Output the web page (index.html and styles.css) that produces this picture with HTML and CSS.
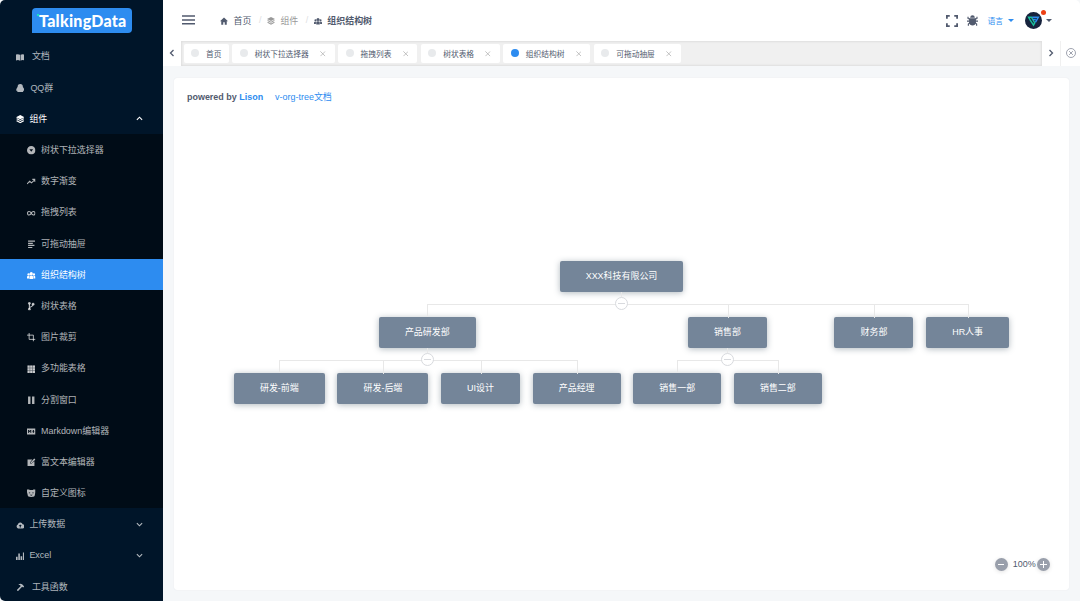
FILE: index.html
```html
<!DOCTYPE html>
<html>
	<head>
		<meta charset="utf-8">
		<title>组织结构树</title>
		<link rel="stylesheet" href="styles.css">
	</head>
	<body>
		<svg class="sprite">
			<symbol id="book" viewBox="0 0 16 16"><path d="M0 3q4-1.500 7.500.3V14.500Q4.500 12.500 0 14zM16 3q-4-1.500-7.500.3V14.500q3-2 7.500-.5z"/></symbol>
			<symbol id="qq" viewBox="0 0 16 16"><path d="M8 0c3.500 0 5 2 5 5.500C15 8 16 11 15.500 12.500c-.5.500-1-.5-1.500-.5 0 1-.8 1.500-1 2 1 .5 1 2-.5 2h-9c-1.500 0-1.500-1.500-.5-2-.2-.5-1-1-1-2-.5 0-1 1-1.500.5C0 11 1 8 3 5.500 3 2 4.500 0 8 0z"/></symbol>
			<symbol id="layers" viewBox="0 0 16 16"><path d="M8 0l8 4-8 4-8-4zM2.500 6.300L8 9.300l5.500-3L16 7.500l-8 4-8-4zM2.500 10L8 13l5.500-3 2.500 1.200-8 4.300-8-4.300z"/></symbol>
			<symbol id="down-circle" viewBox="0 0 16 16"><path fill-rule="evenodd" d="M8 0a8 8 0 110 16A8 8 0 018 0zM4.500 6L8 11l3.500-5z"/></symbol>
			<symbol id="trend" viewBox="0 0 16 16"><path fill="none" stroke="currentColor" stroke-width="2" d="M0 13l5-5 3.500 3L15 5M10 4.500h5v5"/></symbol>
			<symbol id="infinite" viewBox="0 0 16 16"><path fill="none" stroke="currentColor" stroke-width="2" d="M8 8C6 4 1 3.500 1 8s5 4 7 0 7-4.500 7 0-5 4-7 0z"/></symbol>
			<symbol id="list" viewBox="0 0 16 16"><path d="M2 1h13v2.500H2zM2 5h9v2.500H2zM2 9h12v2.500H2zM2 13h8v2.500H2z"/></symbol>
			<symbol id="people" viewBox="0 0 16 16"><circle cx="8" cy="5" r="3"/><circle cx="3" cy="6.500" r="2.200"/><circle cx="13" cy="6.500" r="2.200"/><path d="M4.500 15V11q0-2.500 3.500-2.500t3.500 2.500v4zM0 14v-3q0-2 3.800-2v5zM16 14v-3q0-2-3.800-2v5z"/></symbol>
			<symbol id="branch" viewBox="0 0 16 16"><g fill="none" stroke="currentColor" stroke-width="2.200"><path d="M4.500 3v10M4.500 12c0-4 7-2 7-8"/></g><circle cx="4.500" cy="2.500" r="2.500"/><circle cx="4.500" cy="13.500" r="2.500"/><circle cx="11.500" cy="4" r="2.500"/></symbol>
			<symbol id="crop" viewBox="0 0 16 16"><path fill="none" stroke="currentColor" stroke-width="1.800" d="M4 0v12h12M0 4h12v12"/></symbol>
			<symbol id="grid" viewBox="0 0 16 16"><path d="M1 1h4v4H1zM6 1h4v4H6zM11 1h4v4h-4zM1 6h4v4H1zM6 6h4v4H6zM11 6h4v4h-4zM1 11h4v4H1zM6 11h4v4H6zM11 11h4v4h-4z"/><path fill-opacity=".4" d="M1 1h14v14H1z"/></symbol>
			<symbol id="pause" viewBox="0 0 16 16"><path d="M2 1h4.500v14H2zM9.500 1H14v14H9.500z"/></symbol>
			<symbol id="markdown" viewBox="0 0 16 16"><path fill-rule="evenodd" d="M0 3h16v11H0zM2 5.500v6h1.500V8L5 10l1.500-2v3.500H8v-6H6.500L5 7.500 3.500 5.500zM11 5.500v3H9.500l2.500 3 2.500-3H13v-3z"/></symbol>
			<symbol id="edit" viewBox="0 0 16 16"><path d="M1 3h9L6 8v2.500h2.500L14 6v9H1zM13.500 1L16 3 9 9.500H7V8z"/></symbol>
			<symbol id="bear" viewBox="0 0 16 16"><path fill-rule="evenodd" d="M0 1h4l1 1h6l1-1h4v5l-1 4c0 4-2 5-7 5s-7-1-7-5L0 6zM3.500 6.500v1.500H6V6.500zM10 6.500v1.500h2.500V6.500zM5 11q3 3 6 0z"/></symbol>
			<symbol id="upload" viewBox="0 0 16 16"><path fill-rule="evenodd" d="M4 14a4 4 0 01-.5-7.500A4.700 4.700 0 0112.500 6 4 4 0 0112 14zM8 6.500L5 9.500h2V12h2V9.500h2z"/></symbol>
			<symbol id="chart" viewBox="0 0 16 16"><path d="M0 9h3v6.500H0zM4.300 3h3v12.500h-3zM8.600 8h3v7.500h-3zM13 1h3v14.500h-3z"/></symbol>
			<symbol id="hammer" viewBox="0 0 16 16"><path d="M5 2.500q4-2 7 .5l3.500 3.500-2 2-2-1.500-8 8.500L1.500 13 9 5.500Q7.500 3.500 5 3.500z"/></symbol>
			<symbol id="home" viewBox="0 0 16 16"><path d="M8 1l8 7.500h-2.500V15.500h-4v-5h-3v5h-4V8.500H0z"/></symbol>
			<symbol id="arrow" viewBox="0 0 16 16"><path fill="none" stroke="currentColor" stroke-width="2.600" d="M2 5l6 6 6-6"/></symbol>
			<symbol id="full" viewBox="0 0 16 16"><path fill="none" stroke="currentColor" stroke-width="2.400" d="M1.200 5V1.200H5M11 1.200h3.800V5M14.800 11v3.800H11M5 14.800H1.200V11"/></symbol>
			<symbol id="bug" viewBox="0 0 16 16"><path d="M4.500 4Q5 .5 8 .5T11.500 4z"/><path d="M3 4.800h10v6.500q-1 4-5 4t-5-4z"/><path fill="none" stroke="currentColor" stroke-width="1.700" d="M4 6L1.500 5V2.500M12 6l2.500-1V2.500M4 9H0M12 9h4M4 11.500L2 13v2.500M12 11.500l2 1.500v2.500"/></symbol>
			<symbol id="close" viewBox="0 0 16 16"><path fill="none" stroke="currentColor" stroke-width="2" d="M1 1l14 14M15 1L1 15"/></symbol>
		</svg>
		<div class="layout">
			<div class="sider">
				<div class="logo"><span>TalkingData</span></div>
				<div class="menu">
					<div class="item wide"><svg><use href="#book"/></svg>文档</div>
					<div class="item qq"><svg><use href="#qq"/></svg>QQ群</div>
					<div class="item open"><svg><use href="#layers"/></svg>组件<svg class="arrow up"><use href="#arrow"/></svg></div>
					<div class="submenu">
						<div class="item"><svg><use href="#down-circle"/></svg>树状下拉选择器</div>
						<div class="item"><svg><use href="#trend"/></svg>数字渐变</div>
						<div class="item"><svg><use href="#infinite"/></svg>拖拽列表</div>
						<div class="item"><svg><use href="#list"/></svg>可拖动抽屉</div>
						<div class="item active"><svg><use href="#people"/></svg>组织结构树</div>
						<div class="item"><svg><use href="#branch"/></svg>树状表格</div>
						<div class="item"><svg><use href="#crop"/></svg>图片裁剪</div>
						<div class="item"><svg><use href="#grid"/></svg>多功能表格</div>
						<div class="item"><svg><use href="#pause"/></svg>分割窗口</div>
						<div class="item"><svg><use href="#markdown"/></svg>Markdown编辑器</div>
						<div class="item"><svg><use href="#edit"/></svg>富文本编辑器</div>
						<div class="item"><svg><use href="#bear"/></svg>自定义图标</div>
					</div>
					<div class="item"><svg><use href="#upload"/></svg>上传数据<svg class="arrow"><use href="#arrow"/></svg></div>
					<div class="item"><svg><use href="#chart"/></svg>Excel<svg class="arrow"><use href="#arrow"/></svg></div>
					<div class="item wide"><svg><use href="#hammer"/></svg>工具函数</div>
				</div>
			</div>
			<div class="main">
				<div class="header">
					<svg class="burger" viewBox="0 0 13 10"><path d="M0 .3h13v1.500H0zM0 4.200h13v1.500H0zM0 8.100h13v1.500H0z"/></svg>
					<div class="crumbs">
						<svg><use href="#home"/></svg><span>首页</span><i>/</i>
						<svg class="dim"><use href="#layers"/></svg><span class="dim">组件</span><i>/</i>
						<svg><use href="#people"/></svg><b>组织结构树</b>
					</div>
					<div class="tools">
						<svg class="tool"><use href="#full"/></svg>
						<svg class="tool bug"><use href="#bug"/></svg>
						<span class="lang">语言</span><span class="caret blue"></span>
						<div class="avatar">
							<svg viewBox="0 0 18 18"><circle cx="9" cy="9" r="9" fill="#17233d"/><g fill="none" stroke-width="1.500"><path stroke="#19be9b" d="M5.500 8.500L3.800 5.500h3L10 11M5.500 8.500L9 14l1.700-3"/><path stroke="#2d8cf0" d="M7.500 5.500h6.700L11 11M8.500 8h3"/></g></svg>
							<span class="dot"></span>
						</div>
						<span class="caret"></span>
					</div>
				</div>
				<div class="tags">
					<div class="nav prev"><svg><use href="#arrow"/></svg></div>
					<div class="strip">
						<div class="tag"><i></i>首页</div>
						<div class="tag"><i></i>树状下拉选择器<svg><use href="#close"/></svg></div>
						<div class="tag"><i></i>拖拽列表<svg><use href="#close"/></svg></div>
						<div class="tag"><i></i>树状表格<svg><use href="#close"/></svg></div>
						<div class="tag current"><i></i>组织结构树<svg><use href="#close"/></svg></div>
						<div class="tag"><i></i>可拖动抽屉<svg><use href="#close"/></svg></div>
					</div>
					<div class="nav next"><svg><use href="#arrow"/></svg></div>
					<div class="nav all"><svg viewBox="0 0 16 16"><g fill="none" stroke="currentColor" stroke-width="1.200"><circle cx="8" cy="8" r="7.200"/><path d="M5 5l6 6M11 5l-6 6"/></g></svg></div>
				</div>
				<div class="card">
					<div class="powered"><b>powered by <a>Lison</a></b><a>v-org-tree文档</a></div>
					<div class="tree">
						<div class="branch parent root">
							<div class="node">XXX科技有限公司</div>
							<div class="toggle"></div>
							<div class="children">
								<div class="branch parent">
									<div class="node">产品研发部</div>
									<div class="toggle"></div>
									<div class="children">
										<div class="branch"><div class="node">研发-前端</div></div>
										<div class="branch"><div class="node">研发-后端</div></div>
										<div class="branch"><div class="node">UI设计</div></div>
										<div class="branch"><div class="node">产品经理</div></div>
									</div>
								</div>
								<div class="branch parent">
									<div class="node">销售部</div>
									<div class="toggle"></div>
									<div class="children">
										<div class="branch"><div class="node">销售一部</div></div>
										<div class="branch"><div class="node">销售二部</div></div>
									</div>
								</div>
								<div class="branch"><div class="node">财务部</div></div>
								<div class="branch"><div class="node">HR人事</div></div>
							</div>
						</div>
					</div>
					<div class="zoom"><span class="btn minus"></span><span class="num">100%</span><span class="btn plus"></span></div>
				</div>
			</div>
		</div>
	</body>
</html>
```

FILE: styles.css
```css
* {
	box-sizing: border-box;
}

body {
	margin: 0;
	background: #f5f7f9;
	font-family: "Liberation Sans", "Noto Sans CJK SC", sans-serif;
	font-size: 8.96px;
	color: #515a6e;
}

svg {
	fill: currentColor;
	flex: none;
}

.sprite {
	display: none;
}

i {
	font-style: normal;
}

.layout {
	display: flex;
	width: 1080px;
	height: 601px;
	overflow: hidden;
	border-radius: 5px;
	background: #f5f7f9;
}

/* sidebar */
.sider {
	width: 162.6px;
	flex: none;
	background: #001529;
	color: rgba(255, 255, 255, 0.7);
	overflow: hidden;
}

.logo {
	width: 100px;
	height: 25px;
	margin: 8px 0 7.4px 32px;
	padding-left: 5px;
	border-radius: 4px 4px 4px 0;
	background: #2d8cf0;
	color: #fff;
	font: 900 16px/25px Lato, sans-serif;
	letter-spacing: 0.25px;
}

.logo span {
	display: inline-block;
	padding-left: 2px;
	background: linear-gradient(#19e0c0, #19e0c0) no-repeat 0 6px / 2px 2px;
}

.item {
	display: flex;
	align-items: center;
	height: 31.2px;
	padding: 0 18.5px 0 15.6px;
	white-space: nowrap;
}

.item svg {
	width: 8.5px;
	height: 8.5px;
	margin: 2px 5.3px 0 0;
}

.item.wide svg {
	margin-right: 7.8px;
}

.item.qq svg {
	margin-right: 6.3px;
}

.item .arrow {
	width: 7px;
	height: 7px;
	margin: 1px 1px 0 auto;
}

.item .arrow.up {
	transform: rotate(180deg);
}

.item.open {
	color: #fff;
}

.submenu {
	background: #000c17;
}

.submenu .item {
	padding-left: 27.4px;
}

.submenu .item svg {
	margin-right: 5.1px;
}

.submenu .item.active {
	background: #2d8cf0;
	color: #fff;
}

/* header */
.main {
	flex: 1;
	display: flex;
	flex-direction: column;
	min-width: 0;
}

.header {
	display: flex;
	align-items: center;
	height: 41px;
	padding: 0 28px 0 19.4px;
	background: #fff;
}

.burger {
	width: 13px;
	height: 10px;
	margin-top: -1px;
}

.crumbs {
	display: flex;
	align-items: center;
	margin: -1px 0 0 25.5px;
}

.crumbs svg {
	width: 8px;
	height: 8px;
	margin: 2px 5px 0 0;
}

.crumbs i {
	margin: 0 6px 0 7.5px;
	color: #dcdee2;
}

.crumbs .dim {
	color: #999;
}

.crumbs b {
	color: #515a6e;
}

.tools {
	display: flex;
	align-items: center;
	margin-left: auto;
}

.tool {
	width: 12px;
	height: 12px;
}

.tool.bug {
	width: 11px;
	height: 11px;
	margin: 0 9px 0 9.5px;
}

.lang {
	font-size: 7.8px;
	color: #2d8cf0;
}

.caret {
	border: 3px solid transparent;
	border-top-color: #515a6e;
	border-bottom: 0;
}

.caret.blue {
	margin: 0 10.5px 0 5px;
	border-top-color: #2d8cf0;
}

.avatar {
	position: relative;
	width: 17px;
	height: 17px;
	margin-right: 4.5px;
}

.avatar svg {
	display: block;
	width: 17px;
	height: 17px;
}

.avatar .dot {
	position: absolute;
	top: -2px;
	right: -4px;
	width: 5px;
	height: 5px;
	border-radius: 50%;
	background: #ed4014;
}

/* opened tabs */
.tags {
	display: flex;
	height: 25px;
}

.nav {
	display: flex;
	align-items: center;
	justify-content: center;
	width: 18px;
	background: #fff;
}

.nav svg {
	width: 8px;
	height: 8px;
	margin-top: -1px;
}

.nav.prev svg {
	transform: rotate(90deg);
}

.nav.next svg {
	transform: rotate(-90deg);
}

.nav.all {
	width: 20px;
	border-left: 1px solid #f0f0f0;
	color: #808695;
}

.nav.all svg {
	width: 10px;
	height: 10px;
	margin-right: -1px;
}

.strip {
	flex: 1;
	display: flex;
	align-items: center;
	gap: 3.5px;
	padding-left: 3px;
	background: #f0f0f0;
	box-shadow: inset 0 0 2px 1px rgba(100, 100, 100, 0.12);
}

.tag {
	display: flex;
	align-items: center;
	height: 19.5px;
	padding: 0 7.2px 0 7.5px;
	border-radius: 2px;
	background: #fff;
	font-size: 7.72px;
}

.tag i {
	width: 8px;
	height: 8px;
	margin: -1px 7px 0 0;
	border-radius: 50%;
	background: #e8eaec;
}

.tag.current i {
	background: #2d8cf0;
}

.tag svg {
	width: 5.6px;
	height: 5.6px;
	margin: 1px 1.6px 0 11.4px;
	color: #aaa;
}

/* content */
.card {
	flex: 1;
	display: flex;
	flex-direction: column;
	margin: 12px 11px 11px 11.4px;
	border-radius: 3px;
	background: #fff;
	box-shadow: 0 0 1px #dcdee2;
}

.powered {
	display: flex;
	gap: 12px;
	height: 39px;
	padding: 12px 0 0 13px;
	line-height: 14px;
}

.powered a {
	color: #2d8cf0;
}

.tree {
	flex: 1;
	display: flex;
	justify-content: center;
	padding-top: 144px;
}

.branch {
	position: relative;
	display: flex;
	flex-direction: column;
	align-items: center;
	padding: 13px 6.3px 0;
}

.branch.parent {
	padding-left: 0;
	padding-right: 0;
}

.branch.root {
	padding-top: 0;
}

.node {
	height: 31px;
	padding: 0 26.1px;
	border-radius: 2px;
	background: #748599;
	box-shadow: 0 1px 6px rgba(60, 80, 95, 0.4);
	color: #fff;
	line-height: 31px;
	white-space: nowrap;
}

.toggle {
	position: relative;
	z-index: 1;
	width: 13px;
	height: 13px;
	margin: 5px 0 -6px;
	border: 1px solid #d8dade;
	border-radius: 50%;
	background: linear-gradient(#d8dade, #d8dade) no-repeat center / 7px 1px #fff;
}

.toggle::before {
	content: "";
	position: absolute;
	top: -6px;
	left: 5px;
	width: 1px;
	height: 5px;
	background: #e8e8e8;
}

.children {
	display: flex;
}

/* connector lines: one half on each side of the child */
.children > .branch::before,
.children > .branch::after {
	content: "";
	position: absolute;
	top: 0;
	width: 50%;
	height: 13px;
	border-top: 1px solid #e8e8e8;
}

.children > .branch::before {
	left: 0;
	border-right: 1px solid #e8e8e8;
}

.children > .branch::after {
	right: 0;
}

.children > .branch:first-child::before,
.children > .branch:last-child::after {
	border-top: 0;
}

.zoom {
	display: flex;
	align-items: center;
	justify-content: flex-end;
	padding: 0 19.4px 19px 0;
}

.zoom .num {
	width: 28px;
	margin-right: 1px;
	padding-bottom: 2px;
	text-align: right;
}

.btn {
	width: 13px;
	height: 13px;
	border-radius: 50%;
	background: linear-gradient(#fff, #fff) no-repeat center / 6px 1px #999fab;
	box-shadow: 0 1px 4px rgba(0, 0, 0, 0.12);
}

.btn.plus {
	background: linear-gradient(#fff, #fff) no-repeat center / 7px 1px, linear-gradient(#fff, #fff) no-repeat center / 1px 7px #999fab;
}
```
